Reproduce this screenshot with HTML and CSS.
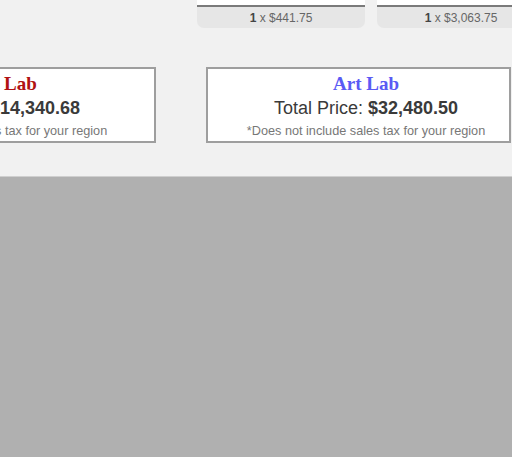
FILE: index.html
```html
<!DOCTYPE html>
<html>
<head>
<meta charset="utf-8">
<link rel="stylesheet" href="styles.css">
</head>
<body>
<div class="page">
  <div class="top-row">
    <div class="card">
      <div class="card-body"></div>
      <div class="card-foot"><b>1</b> x $441.75</div>
    </div>
    <div class="card">
      <div class="card-body"></div>
      <div class="card-foot"><b>1</b> x $3,063.75</div>
    </div>
  </div>
  <div class="price-row">
    <div class="price-box wide">
      <div class="lab-title red">Science Lab</div>
      <div class="total">Total Price: <b>$14,340.68</b></div>
      <div class="note">*Does not include sales tax for your region</div>
    </div>
    <div class="price-box">
      <div class="lab-title blue">Art Lab</div>
      <div class="total">Total Price: <b>$32,480.50</b></div>
      <div class="note">*Does not include sales tax for your region</div>
    </div>
  </div>
  <div class="stage"></div>
</div>
</body>
</html>
```

FILE: styles.css
```css
html, body {
  margin: 0;
  padding: 0;
  overflow: hidden;
}
body {
  background: #f1f1f1;
  font-family: "Liberation Sans", Arial, sans-serif;
}
.page {
  display: flex;
  flex-direction: column;
  min-height: 100vh;
  overflow: hidden;
}
.top-row {
  display: flex;
  gap: 12px;
  padding-left: 197px;
}
.card {
  width: 168px;
  flex-shrink: 0;
}
.card-body {
  height: 5px;
  background: #ffffff;
  border-bottom: 2px solid #7a7a7a;
}
.card-foot {
  height: 21px;
  line-height: 23px;
  background: #e6e6e6;
  border-radius: 0 0 7px 7px;
  text-align: center;
  font-size: 12px;
  color: #666;
}
.card-foot b {
  color: #444;
}
.price-row {
  display: flex;
  gap: 50px;
  margin-top: 39px;
  margin-left: -195px;
}
.price-box {
  flex-shrink: 0;
  box-sizing: border-box;
  width: 305px;
  height: 76px;
  border: 2px solid #9e9e9e;
  background: #ffffff;
  padding-left: 15px;
  text-align: center;
}
.price-box.wide {
  width: 351px;
}
.lab-title {
  font-family: "Liberation Serif", "Times New Roman", serif;
  font-weight: bold;
  font-size: 19px;
  line-height: 22px;
  margin-top: 4px;
}
.red { color: #b01212; }
.blue { color: #5a5af4; }
.total {
  font-size: 18px;
  line-height: 22px;
  color: #3a3a3a;
  margin-top: 2px;
}
.note {
  font-size: 12.7px;
  line-height: 16px;
  color: #777;
  margin-top: 4px;
}
.stage {
  flex: 1;
  margin-top: 33px;
  border-top: 1px solid #cfcfcf;
  background: #b0b0b0;
}
```
